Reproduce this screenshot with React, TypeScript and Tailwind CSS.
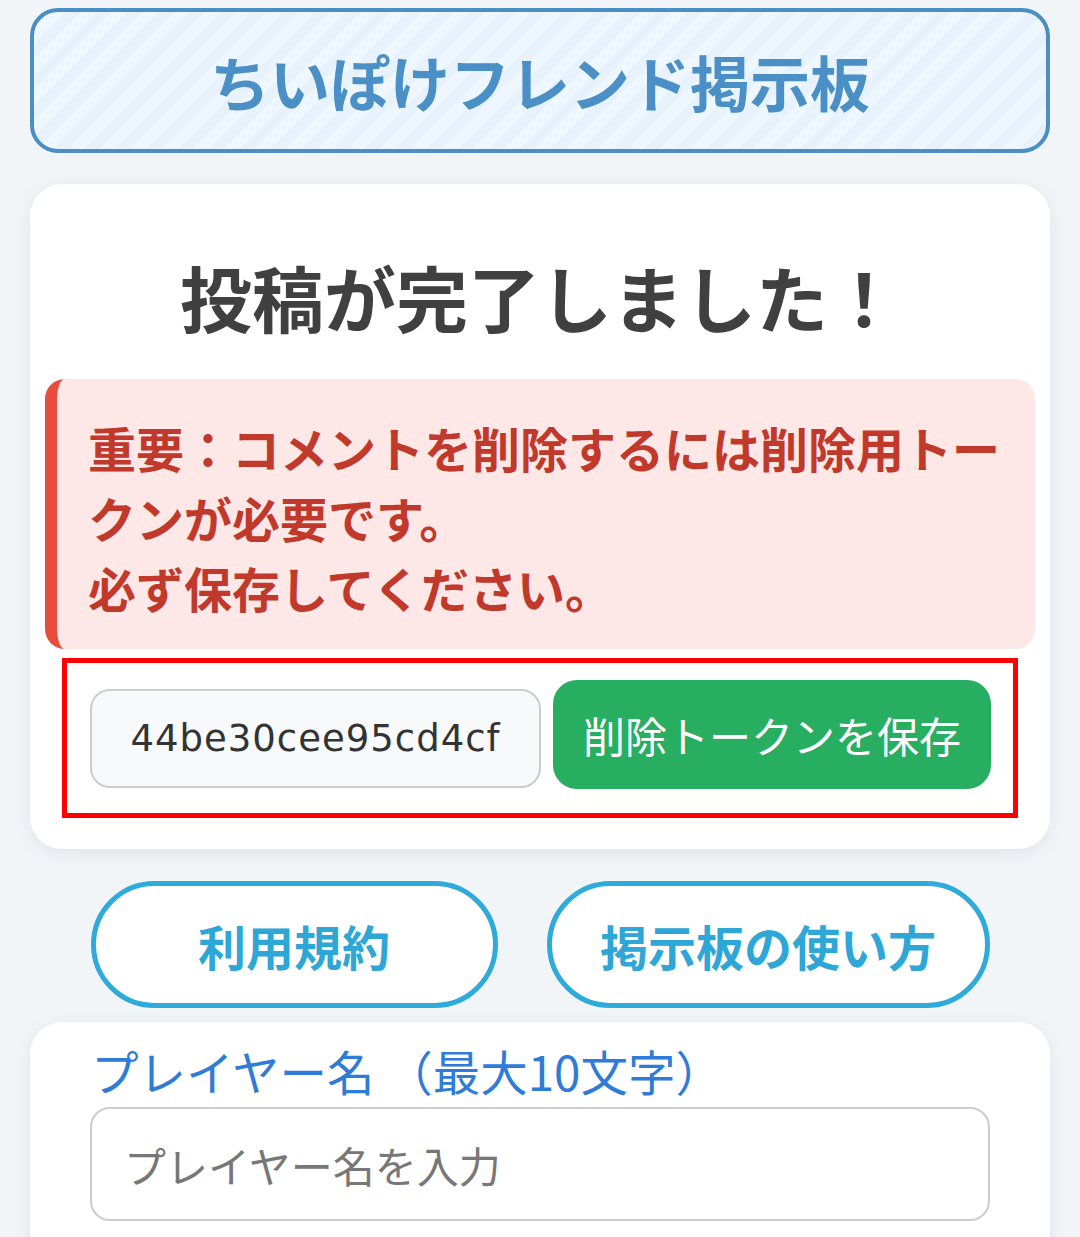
import React from "react";

const JP = "font-['Noto_Sans_CJK_JP','Noto_Sans',sans-serif]";

function BoardHeader() {
  return (
    <header className="mx-[30px] flex h-[145px] items-center justify-center rounded-[28px] border-4 border-[#4a8ec3] bg-[repeating-linear-gradient(135deg,#e7f2fc_0px,#e7f2fc_11px,#eff7fe_11px,#eff7fe_22px)]">
      <h1 className="text-[60px] font-bold leading-none text-[#4a8fc6]">ちいぽけフレンド掲示板</h1>
    </header>
  );
}

function CompleteCard({ token }: { token: string }) {
  return (
    <section className="mx-[30px] mt-[31px] rounded-[32px] bg-white pt-[70px] pb-[31px] shadow-[0_4px_18px_rgba(30,50,80,0.09)]">
      <h2 className="text-center text-[72px] font-bold leading-[84px] text-[#404040]">
        投稿が完了しました！
      </h2>
      <div className="mx-[15px] mt-[41px] rounded-[20px] border-l-[12px] border-[#e74c3c] bg-[#fde7e7] pt-[33px] pb-[27px] pl-[31px] pr-[28px]">
        <p className="text-[48px] font-bold leading-[70px] text-[#c0392b]">
          重要：コメントを削除するには削除用トークンが必要です。
          <br />
          必ず保存してください。
        </p>
      </div>
      <div className="mx-[32px] mt-[9px] flex items-start gap-[12px] border-[5px] border-[#ff0000] pt-[17px] pb-[24px] pl-[23px]">
        <input
          readOnly
          value={token}
          className="mt-[9px] h-[99px] w-[451px] rounded-[20px] border-2 border-[#cccccc] bg-[#f8f9fa] text-center font-['DejaVu_Sans',sans-serif] text-[37px] tracking-[1px] text-[#333333] outline-none"
        />
        <button className="h-[109px] w-[438px] rounded-[24px] bg-[#27ae60] text-[42px] leading-none text-white">
          削除トークンを保存
        </button>
      </div>
    </section>
  );
}

function LinkButtons() {
  return (
    <div className="mt-[32px] flex justify-center gap-[49px]">
      <button className="h-[127px] w-[407px] rounded-full border-[5px] border-[#2eaadb] bg-white text-[48px] font-bold leading-none text-[#2ea7d7]">
        利用規約
      </button>
      <button className="h-[127px] w-[443px] rounded-full border-[5px] border-[#2eaadb] bg-white text-[48px] font-bold leading-none text-[#2ea7d7]">
        掲示板の使い方
      </button>
    </div>
  );
}

function PostForm() {
  return (
    <section className="mx-[30px] mt-[14px] rounded-[32px] bg-white px-[60px] pt-[19px] pb-[80px] shadow-[0_4px_18px_rgba(30,50,80,0.09)]">
      <label className="block pl-[1px] text-[47.5px] leading-[60px] text-[#2f7bd8] [text-spacing-trim:space-all]">
        プレイヤー名 （最大10文字）
      </label>
      <input
        placeholder="プレイヤー名を入力"
        className="mt-[6px] block h-[114px] w-full rounded-[20px] border-2 border-[#cccccc] bg-white px-[32px] text-[42px] text-[#333333] outline-none placeholder:text-[#777777]"
      />
      <div className="h-[120px]" />
    </section>
  );
}

export default function App() {
  return (
    <div className={`${JP} min-h-screen bg-[#f2f5f8] pt-[8px]`}>
      <BoardHeader />
      <CompleteCard token="44be30cee95cd4cf" />
      <LinkButtons />
      <PostForm />
    </div>
  );
}
